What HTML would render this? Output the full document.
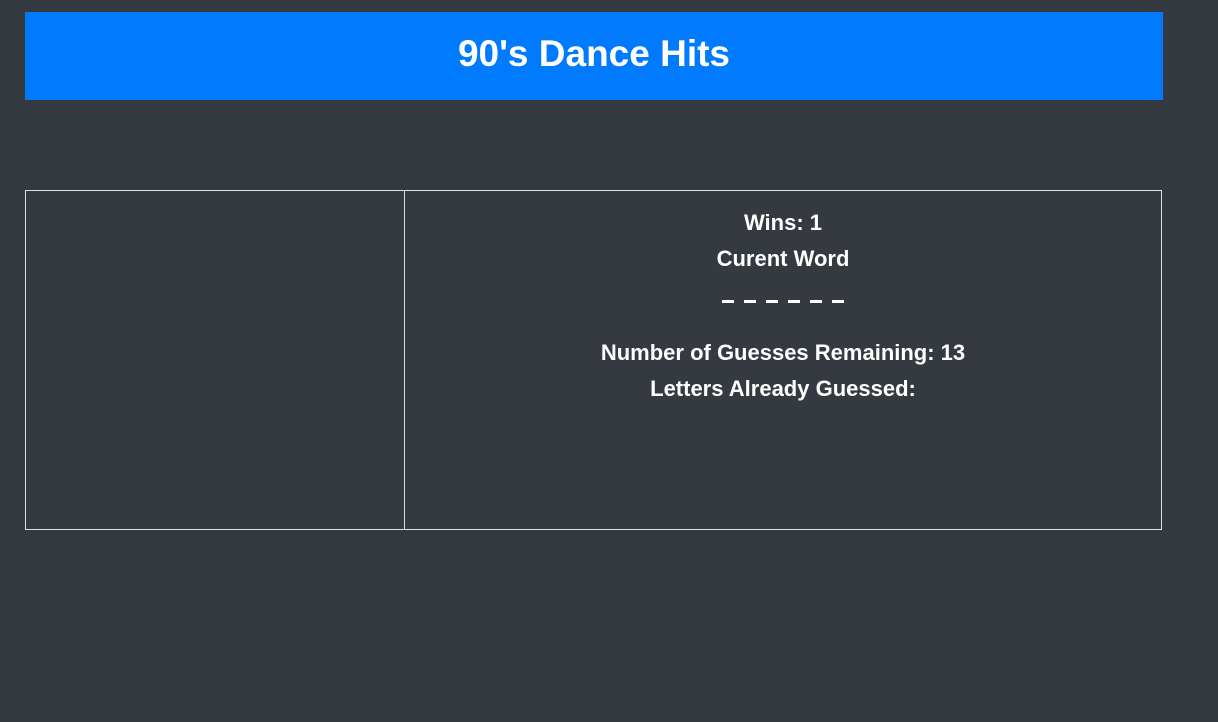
<!DOCTYPE html>
<html><head><style>
body{margin:0;background:#343a40;width:1218px;height:722px;font-family:"Liberation Sans",sans-serif;color:#fff;overflow:hidden}
.hdr{position:absolute;left:25px;top:12px;width:1138px;height:88px;background:#007bff;text-align:center;font-size:37px;line-height:84px;font-weight:bold}
.l{position:absolute;left:25px;top:190px;width:378px;height:338px;border:1px solid #dee2e6}
.r{position:absolute;left:404px;top:190px;width:756px;height:338px;border:1px solid #dee2e6;text-align:center;font-size:22px;font-weight:bold}
.r div.t{position:absolute;left:0;right:0}
.d{position:absolute;top:109px;width:12px;height:3px;background:#fff}
</style></head><body>
<div class="hdr">90's Dance Hits</div>
<div class="l"></div>
<div class="r">
<div class="t" style="top:19px">Wins: 1</div>
<div class="t" style="top:55px">Curent Word</div>
<div class="d" style="left:317px"></div>
<div class="d" style="left:339px"></div>
<div class="d" style="left:361px"></div>
<div class="d" style="left:383px"></div>
<div class="d" style="left:405px"></div>
<div class="d" style="left:427px"></div>
<div class="t" style="top:149px">Number of Guesses Remaining: 13</div>
<div class="t" style="top:185px">Letters Already Guessed:</div>
</div>
</body></html>
